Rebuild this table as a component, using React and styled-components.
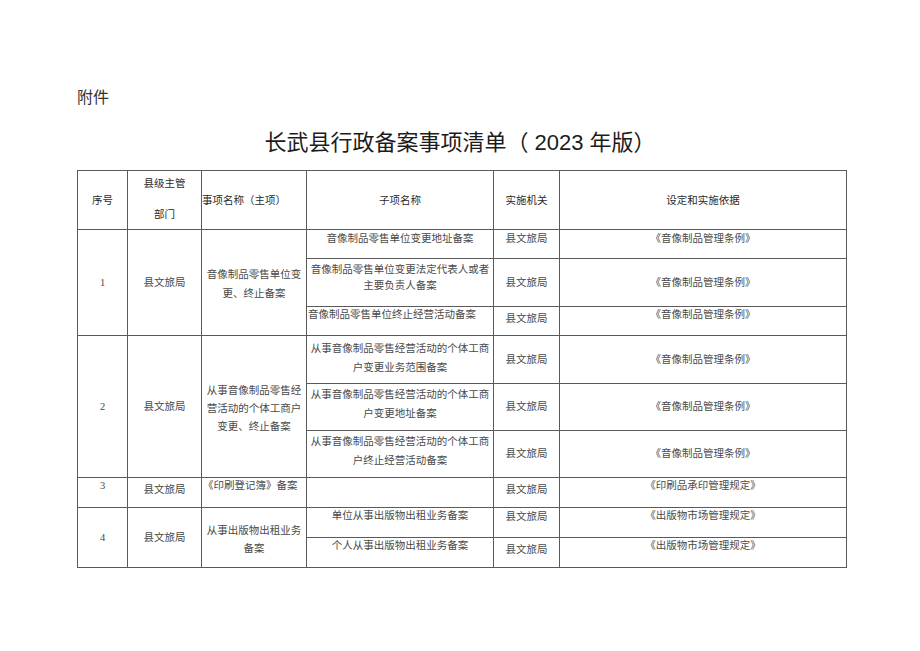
import React from 'react';
import styled, {createGlobalStyle} from "styled-components";

const GlobalStyle = createGlobalStyle`
  html, body {
    margin: 0;
    background: #fff;
  }
`

const Page = styled.div`
  width: 920px;
  min-height: 651px;
  box-sizing: border-box;
  padding: 86px 0 0 77px;
  font-family: "Noto Sans CJK SC", sans-serif;
`

const Attach = styled.div`
  font-size: 16px;
  line-height: 20px;
  color: #333;
`

const Title = styled.h1`
  margin: 22px 0 12px -77px;
  width: 920px;
  text-align: center;
  font-family: "Liberation Sans", "Noto Sans CJK SC", sans-serif;
  font-size: 22px;
  line-height: 30px;
  font-weight: 400;
  color: #1c1c1c;
  white-space: pre;
`

const Sheet = styled.table`
  width: 769px;
  table-layout: fixed;
  border-collapse: collapse;
  border: 1px solid #5a5a5a;
`

const Row = styled.tr`
  height: ${p => p.$h}px;
`

const HeadCell = styled.th`
  border: 1px solid #5a5a5a;
  padding: 0;
  font-family: "Noto Sans CJK SC", sans-serif;
  font-size: 10.5px;
  font-weight: 400;
  line-height: 16px;
  color: #2a2a2a;
  text-align: ${p => p.$align || 'center'};
  vertical-align: middle;
`

const HeadStack = styled.div`
  display: flex;
  flex-direction: column;
  align-items: center;
  gap: 15px;
  padding-bottom: 3px;
`

const Cell = styled.td`
  border: 1px solid #5a5a5a;
  padding: ${p => p.$pt || 0}px 0 0 ${p => p.$pl || 0}px;
  font-family: "Liberation Serif", "Noto Sans CJK SC", serif;
  font-size: 10.5px;
  line-height: ${p => p.$lh || 16}px;
  color: #4a4a4a;
  text-align: ${p => p.$align || 'center'};
  vertical-align: ${p => p.$v || 'top'};
  white-space: nowrap;
  overflow: hidden;
`

const ORG = '县文旅局'
const AV = '《音像制品管理条例》'
const CB = '《出版物市场管理规定》'

const App = () => {
  return (
    <Page>
      <GlobalStyle/>
      <Attach>附件</Attach>
      <Title>长武县行政备案事项清单（ 2023 年版）</Title>
      <Sheet>
        <colgroup>
          <col style={{width: 50}}/>
          <col style={{width: 74}}/>
          <col style={{width: 105}}/>
          <col style={{width: 187}}/>
          <col style={{width: 66}}/>
          <col style={{width: 287}}/>
        </colgroup>
        <tbody>
        <Row $h={59}>
          <HeadCell>序号</HeadCell>
          <HeadCell>
            <HeadStack>
              <span>县级主管</span>
              <span>部门</span>
            </HeadStack>
          </HeadCell>
          <HeadCell $align={'left'}>事项名称（主项）</HeadCell>
          <HeadCell>子项名称</HeadCell>
          <HeadCell>实施机关</HeadCell>
          <HeadCell>设定和实施依据</HeadCell>
        </Row>

        {/* 1 */}
        <Row $h={29}>
          <Cell rowSpan={3} $v={'middle'}>1</Cell>
          <Cell rowSpan={3} $v={'middle'}>{ORG}</Cell>
          <Cell rowSpan={3} $v={'middle'} $lh={19} $pt={2}>音像制品零售单位变<br/>更、终止备案</Cell>
          <Cell $pt={1}>音像制品零售单位变更地址备案</Cell>
          <Cell $pt={1}>{ORG}</Cell>
          <Cell $pt={1}>{AV}</Cell>
        </Row>
        <Row $h={48}>
          <Cell $pt={3}>音像制品零售单位变更法定代表人或者<br/>主要负责人备案</Cell>
          <Cell $v={'middle'}>{ORG}</Cell>
          <Cell $v={'middle'}>{AV}</Cell>
        </Row>
        <Row $h={29}>
          <Cell $align={'left'} $pl={1}>音像制品零售单位终止经营活动备案</Cell>
          <Cell $pt={4}>{ORG}</Cell>
          <Cell>{AV}</Cell>
        </Row>

        {/* 2 */}
        <Row $h={48}>
          <Cell rowSpan={3} $v={'middle'}>2</Cell>
          <Cell rowSpan={3} $v={'middle'}>{ORG}</Cell>
          <Cell rowSpan={3} $v={'middle'} $lh={18} $pt={5}>从事音像制品零售经<br/>营活动的个体工商户<br/>变更、终止备案</Cell>
          <Cell $pt={3} $lh={19}>从事音像制品零售经营活动的个体工商<br/>户变更业务范围备案</Cell>
          <Cell $v={'middle'}>{ORG}</Cell>
          <Cell $v={'middle'}>{AV}</Cell>
        </Row>
        <Row $h={47}>
          <Cell $pt={1} $lh={19}>从事音像制品零售经营活动的个体工商<br/>户变更地址备案</Cell>
          <Cell $v={'middle'}>{ORG}</Cell>
          <Cell $v={'middle'}>{AV}</Cell>
        </Row>
        <Row $h={47}>
          <Cell $pt={1} $lh={19}>从事音像制品零售经营活动的个体工商<br/>户终止经营活动备案</Cell>
          <Cell $v={'middle'}>{ORG}</Cell>
          <Cell $v={'middle'}>{AV}</Cell>
        </Row>

        {/* 3 */}
        <Row $h={30}>
          <Cell>3</Cell>
          <Cell $pt={4}>{ORG}</Cell>
          <Cell $align={'left'} $pl={1}>《印刷登记簿》备案</Cell>
          <Cell/>
          <Cell $pt={4}>{ORG}</Cell>
          <Cell>《印刷品承印管理规定》</Cell>
        </Row>

        {/* 4 */}
        <Row $h={30}>
          <Cell rowSpan={2} $v={'middle'}>4</Cell>
          <Cell rowSpan={2} $v={'middle'}>{ORG}</Cell>
          <Cell rowSpan={2} $v={'middle'} $lh={18} $pt={4}>从事出版物出租业务<br/>备案</Cell>
          <Cell>单位从事出版物出租业务备案</Cell>
          <Cell $pt={1}>{ORG}</Cell>
          <Cell>{CB}</Cell>
        </Row>
        <Row $h={30}>
          <Cell>个人从事出版物出租业务备案</Cell>
          <Cell $pt={4}>{ORG}</Cell>
          <Cell>{CB}</Cell>
        </Row>
        </tbody>
      </Sheet>
    </Page>
  );
};

export default App;
